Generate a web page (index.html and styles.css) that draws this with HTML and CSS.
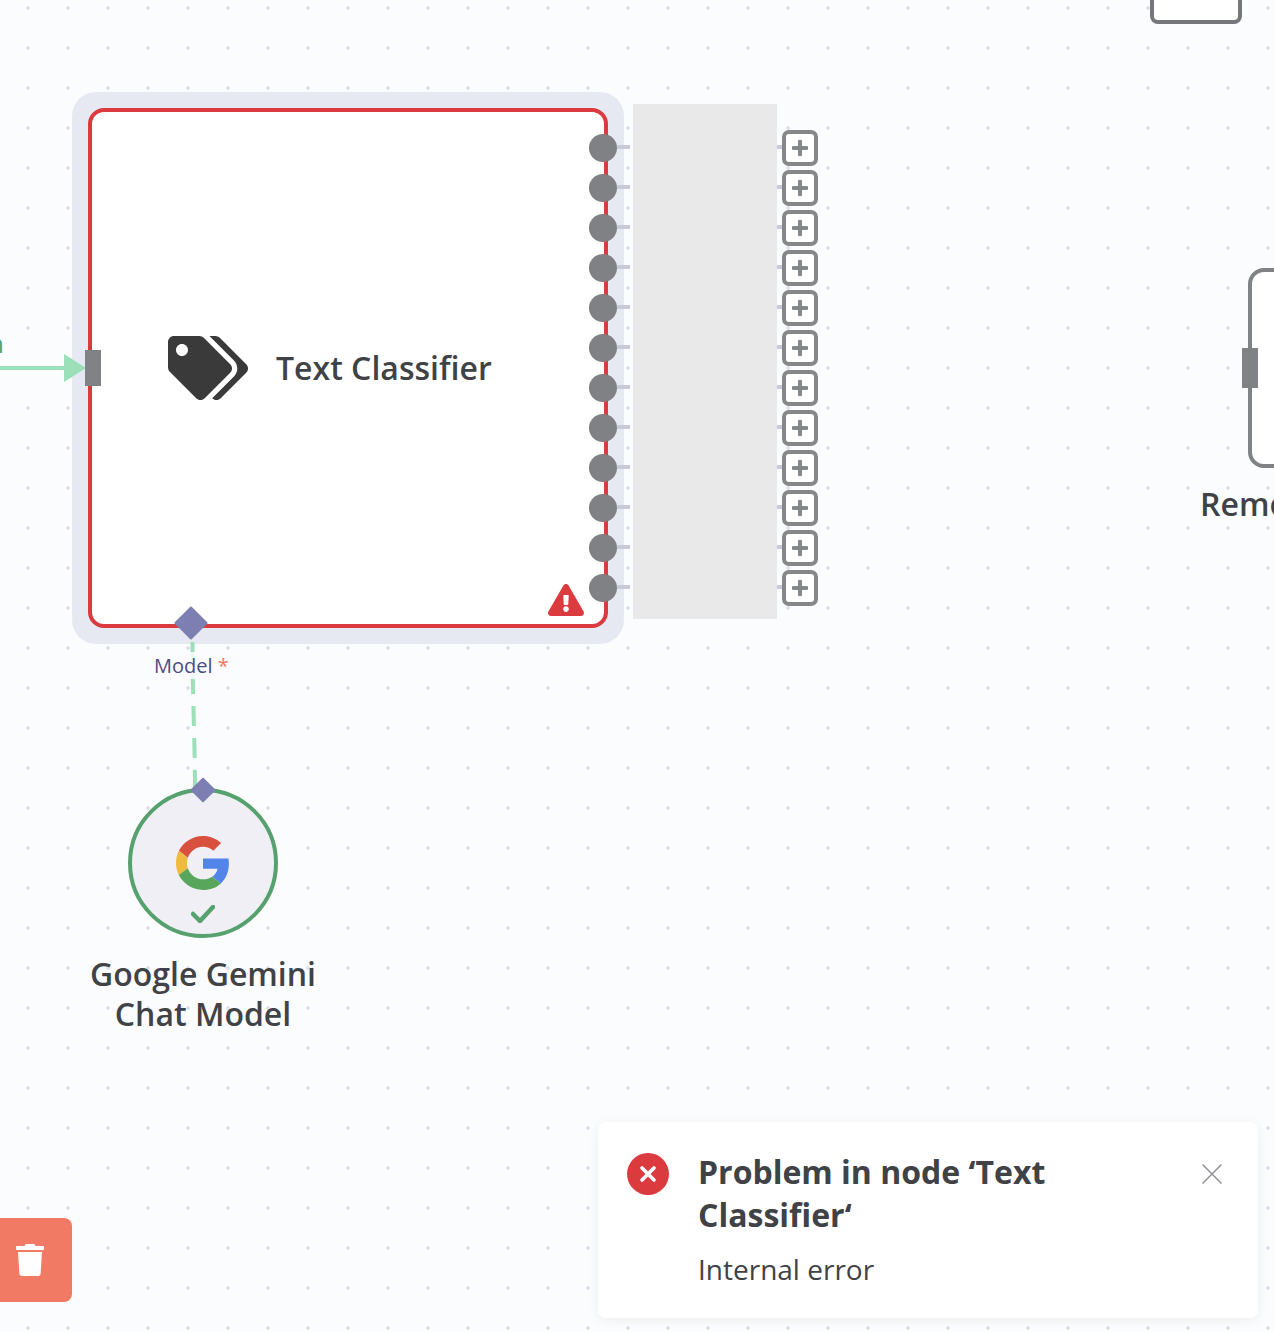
FILE: index.html
```html
<!DOCTYPE html>
<html lang="en">
<head>
<meta charset="utf-8">
<title>Workflow canvas</title>
<link rel="stylesheet" href="styles.css">
</head>
<body>
<main class="canvas">
  <div class="node-top"></div>

  <span class="edge-fragment">n</span>

  <div class="halo"></div>
  <div class="node-classifier">
    <svg class="tag-icon" viewBox="0 0 640 512" width="80" height="64" aria-hidden="true"><path d="M497.941 225.941L286.059 14.059A48 48 0 0 0 252.118 0H48C21.49 0 0 21.49 0 48v204.118a48 48 0 0 0 14.059 33.941l211.882 211.882c18.744 18.745 49.136 18.746 67.882 0l204.118-204.118c18.745-18.745 18.745-49.137 0-67.882zM112 160c-26.51 0-48-21.49-48-48s21.49-48 48-48 48 21.49 48 48-21.49 48-48 48zm513.941 133.823L421.823 497.941c-18.745 18.745-49.137 18.745-67.882 0l-.36-.36L527.64 323.522c16.999-16.999 26.36-39.6 26.36-63.64s-9.362-46.641-26.36-63.64L331.397 0h48.721a48 48 0 0 1 33.941 14.059l211.882 211.882c18.745 18.745 18.745 49.137 0 67.882z"/></svg>
    <span class="node-title">Text Classifier</span>
    <svg class="warn-icon" viewBox="0 0 576 512" width="36" height="32" aria-hidden="true"><path d="M569.517 440.013C587.975 472.007 564.806 512 527.94 512H48.054c-36.937 0-59.999-40.055-41.577-71.987L246.423 24.035c18.467-32.009 64.72-31.951 83.154 0l239.94 416.001zM288 354c-25.405 0-46 20.595-46 46s20.595 46 46 46 46-20.595 46-46-20.595-46-46-46zm-43.673-165.346l7.418 136c.347 6.364 5.609 11.346 11.982 11.346h48.546c6.373 0 11.635-4.982 11.982-11.346l7.418-136c.375-6.874-5.098-12.654-11.982-12.654h-63.383c-6.884 0-12.356 5.78-11.981 12.654z"/></svg>
  </div>

  <svg class="wires" width="1274" height="1332" viewBox="0 0 1274 1332" aria-hidden="true">
    <path class="wire" d="M0 368H66"/>
    <polygon class="wire-head" points="64,354 86,368 64,382"/>
    <path class="wire wire-dashed" d="M192.5 642C192.5 700 195 740 195 790"/>
  </svg>
  <div class="input-handle input-handle-left"></div>

  <div class="outputs">
    <div class="output-row"><i class="dot"></i><i class="stub"></i><i class="stub-end"></i><b class="plus"></b></div>
    <div class="output-row"><i class="dot"></i><i class="stub"></i><i class="stub-end"></i><b class="plus"></b></div>
    <div class="output-row"><i class="dot"></i><i class="stub"></i><i class="stub-end"></i><b class="plus"></b></div>
    <div class="output-row"><i class="dot"></i><i class="stub"></i><i class="stub-end"></i><b class="plus"></b></div>
    <div class="output-row"><i class="dot"></i><i class="stub"></i><i class="stub-end"></i><b class="plus"></b></div>
    <div class="output-row"><i class="dot"></i><i class="stub"></i><i class="stub-end"></i><b class="plus"></b></div>
    <div class="output-row"><i class="dot"></i><i class="stub"></i><i class="stub-end"></i><b class="plus"></b></div>
    <div class="output-row"><i class="dot"></i><i class="stub"></i><i class="stub-end"></i><b class="plus"></b></div>
    <div class="output-row"><i class="dot"></i><i class="stub"></i><i class="stub-end"></i><b class="plus"></b></div>
    <div class="output-row"><i class="dot"></i><i class="stub"></i><i class="stub-end"></i><b class="plus"></b></div>
    <div class="output-row"><i class="dot"></i><i class="stub"></i><i class="stub-end"></i><b class="plus"></b></div>
    <div class="output-row"><i class="dot"></i><i class="stub"></i><i class="stub-end"></i><b class="plus"></b></div>
  </div>
  <div class="output-mask"></div>

  <div class="diamond diamond-top"></div>
  <div class="model-label">Model <span class="required">*</span></div>

  <div class="node-gemini">
    <svg class="google-icon" viewBox="0 0 48 48" width="54" height="54" aria-hidden="true">
      <path fill="#d9503f" d="M24 9.5c3.54 0 6.71 1.22 9.21 3.6l6.85-6.85C35.9 2.38 30.47 0 24 0 14.62 0 6.51 5.38 2.56 13.22l7.98 6.19C12.43 13.72 17.74 9.5 24 9.5z"/>
      <path fill="#5284ea" d="M46.98 24.55c0-1.57-.15-3.09-.38-4.55H24v9.02h12.94c-.58 2.96-2.26 5.48-4.78 7.18l7.73 6c4.51-4.18 7.09-10.36 7.09-17.65z"/>
      <path fill="#efbb3f" d="M10.53 28.59c-.48-1.45-.76-2.99-.76-4.59s.27-3.14.76-4.59l-7.98-6.19C.92 16.46 0 20.12 0 24c0 3.88.92 7.54 2.56 10.78l7.97-6.19z"/>
      <path fill="#58a65c" d="M24 48c6.48 0 11.93-2.13 15.89-5.81l-7.73-6c-2.15 1.45-4.92 2.3-8.16 2.3-6.26 0-11.57-4.22-13.47-9.91l-7.98 6.19C6.51 42.62 14.62 48 24 48z"/>
    </svg>
    <svg class="check-icon" viewBox="0 0 24 18" width="24" height="18" aria-hidden="true"><path d="M2 9l7 7L22 2"/></svg>
  </div>
  <div class="diamond diamond-bottom"></div>
  <div class="node-label gemini-label">Google Gemini<br>Chat Model</div>

  <div class="node-right"></div>
  <div class="input-handle input-handle-right"></div>
  <div class="node-label right-label">Remove</div>

  <button class="trash" type="button" aria-label="Delete">
    <svg viewBox="0 0 448 512" width="28" height="32" aria-hidden="true"><path d="M432 32H312l-9.4-18.7A24 24 0 0 0 281.1 0H166.8a23.72 23.72 0 0 0-21.4 13.3L136 32H16A16 16 0 0 0 0 48v32a16 16 0 0 0 16 16h416a16 16 0 0 0 16-16V48a16 16 0 0 0-16-16zM53.2 467a48 48 0 0 0 47.9 45h245.8a48 48 0 0 0 47.9-45L416 128H32z"/></svg>
  </button>

  <aside class="toast">
    <span class="toast-icon">
      <svg viewBox="0 0 18 18" width="18" height="18" aria-hidden="true"><path d="M3 3l12 12M15 3L3 15"/></svg>
    </span>
    <div class="toast-body">
      <h2 class="toast-title">Problem in node ‘Text Classifier‘</h2>
      <p class="toast-text">Internal error</p>
    </div>
    <svg class="toast-close" viewBox="0 0 20 20" width="20" height="20" aria-hidden="true"><path d="M0.5 0.5l19 19M19.5 0.5l-19 19"/></svg>
  </aside>
</main>
</body>
</html>
```

FILE: styles.css
```css
* { box-sizing: border-box; }

html, body {
  margin: 0;
  padding: 0;
  width: 1274px;
  height: 1332px;
  overflow: hidden;
}

body {
  font-family: "Open Sans", "Liberation Sans", sans-serif;
  background: #fbfcfe;
}

.canvas {
  position: relative;
  width: 1274px;
  height: 1332px;
  overflow: hidden;
  background-color: #fbfcfe;
  background-image: radial-gradient(circle at 2px 2px, #dfe1ec 1.8px, transparent 2.1px);
  background-size: 40px 40px;
  background-position: 26px 6px;
}

.wires {
  position: absolute;
  left: 0;
  top: 0;
}

.wire {
  fill: none;
  stroke: #9be0b8;
  stroke-width: 4;
}

.wire-head { fill: #9be0b8; }
.wire-dashed { stroke-dasharray: 20 12; }

.edge-fragment {
  position: absolute;
  right: 1270px;
  top: 325px;
  font-size: 26px;
  line-height: 36px;
  color: #57a16e;
}

.halo {
  position: absolute;
  left: 72px;
  top: 92px;
  width: 552px;
  height: 552px;
  border-radius: 24px;
  background: #e7e9f2;
}

.node-classifier {
  position: absolute;
  left: 88px;
  top: 108px;
  width: 520px;
  height: 520px;
  display: flex;
  align-items: center;
  gap: 28px;
  padding-left: 76px;
  background: #fff;
  border: 4px solid #db3a3e;
  border-radius: 16px;
}

.tag-icon { fill: #3a3a3a; flex: none; }

.node-title {
  font-size: 32px;
  line-height: 40px;
  font-weight: 600;
  color: #404246;
}

.warn-icon {
  position: absolute;
  right: 20px;
  bottom: 8px;
  fill: #db3a3e;
}

.input-handle {
  position: absolute;
  width: 16px;
  background: #818286;
}

.input-handle-left { left: 85px; top: 350px; height: 36px; }
.input-handle-right { left: 1242px; top: 348px; height: 40px; }

.outputs {
  position: absolute;
  left: 589px;
  top: 128px;
  display: flex;
  flex-direction: column;
}

.output-row {
  display: flex;
  align-items: center;
  height: 40px;
}

.dot {
  width: 28px;
  height: 28px;
  border-radius: 50%;
  background: #808185;
  flex: none;
}

.stub,
.stub-end {
  height: 4px;
  margin-top: -2px;
  background: #c6cbd8;
  flex: none;
}

.stub { width: 13px; }
.stub-end { width: 5px; margin-left: 147px; }

.plus {
  position: relative;
  width: 36px;
  height: 36px;
  border: 4px solid #86878b;
  border-radius: 7px;
  background: #fff;
  flex: none;
}

.plus::before,
.plus::after {
  content: "";
  position: absolute;
  background: #86878b;
  border-radius: 1px;
}

.plus::before { left: 6px; top: 12px; width: 16px; height: 4px; }
.plus::after { left: 12px; top: 6px; width: 4px; height: 16px; }

.output-mask {
  position: absolute;
  left: 633px;
  top: 104px;
  width: 144px;
  height: 515px;
  background: #e9e9e9;
}

.diamond {
  position: absolute;
  background: #7d7fb3;
  transform: rotate(45deg);
  border-radius: 1px;
}

.diamond-top { left: 179px; top: 610.5px; width: 24px; height: 24px; }
.diamond-bottom { left: 194px; top: 781px; width: 18px; height: 18px; }

.model-label {
  position: absolute;
  left: 154px;
  top: 652px;
  padding-right: 2px;
  font-size: 20px;
  line-height: 27px;
  color: #4b4d87;
  background: rgba(251, 252, 254, 0.85);
  white-space: nowrap;
}

.required { color: #f2785f; }

.node-gemini {
  position: absolute;
  left: 128px;
  top: 788px;
  width: 150px;
  height: 150px;
  display: flex;
  align-items: center;
  justify-content: center;
  border: 4px solid #57a16e;
  border-radius: 50%;
  background: #f0eff6;
}

.check-icon {
  position: absolute;
  left: 59px;
  top: 113px;
  fill: none;
  stroke: #57a16e;
  stroke-width: 4.5;
  stroke-linecap: round;
  stroke-linejoin: miter;
}

.node-label {
  position: absolute;
  font-size: 32px;
  line-height: 40px;
  font-weight: 600;
  color: #404246;
  white-space: nowrap;
}

.gemini-label {
  left: 53px;
  top: 954px;
  width: 300px;
  text-align: center;
}

.right-label { left: 1200px; top: 484px; }

.node-right {
  position: absolute;
  left: 1248px;
  top: 268px;
  width: 120px;
  height: 200px;
  background: #fff;
  border: 4px solid #818286;
  border-radius: 16px;
}

.node-top {
  position: absolute;
  left: 1150px;
  top: -40px;
  width: 92px;
  height: 64px;
  background: #fff;
  border: 4px solid #75767a;
  border-radius: 8px;
}

.trash {
  position: absolute;
  left: 0;
  top: 1218px;
  width: 72px;
  height: 84px;
  padding: 26px 28px 26px 16px;
  display: flex;
  border: 0;
  border-radius: 0 8px 8px 0;
  background: #f07a63;
}

.trash svg { fill: #fff; flex: none; }

.toast {
  position: absolute;
  left: 598px;
  top: 1122px;
  width: 660px;
  height: 196px;
  display: flex;
  align-items: flex-start;
  gap: 29px;
  padding: 28px 36px 0 29px;
  background: #fff;
  border-radius: 8px;
  box-shadow: 0 2px 12px rgba(0, 0, 0, 0.06);
}

.toast-icon {
  width: 42px;
  height: 42px;
  margin-top: 3px;
  display: flex;
  align-items: center;
  justify-content: center;
  border-radius: 50%;
  background: #db3a3e;
  flex: none;
}

.toast-icon svg {
  fill: none;
  stroke: #fff;
  stroke-width: 3.6;
  stroke-linecap: round;
  width: 18px;
  height: 18px;
}

.toast-body { flex: 1; min-width: 0; }

.toast-title {
  margin: 0;
  width: 380px;
  font-size: 32px;
  line-height: 43px;
  font-weight: 700;
  color: #404246;
}

.toast-text {
  margin: 14px 0 0;
  font-size: 28px;
  line-height: 38px;
  color: #404246;
}

.toast-close {
  margin-top: 14px;
  fill: none;
  stroke: #909196;
  stroke-width: 1.5;
  flex: none;
}
```
